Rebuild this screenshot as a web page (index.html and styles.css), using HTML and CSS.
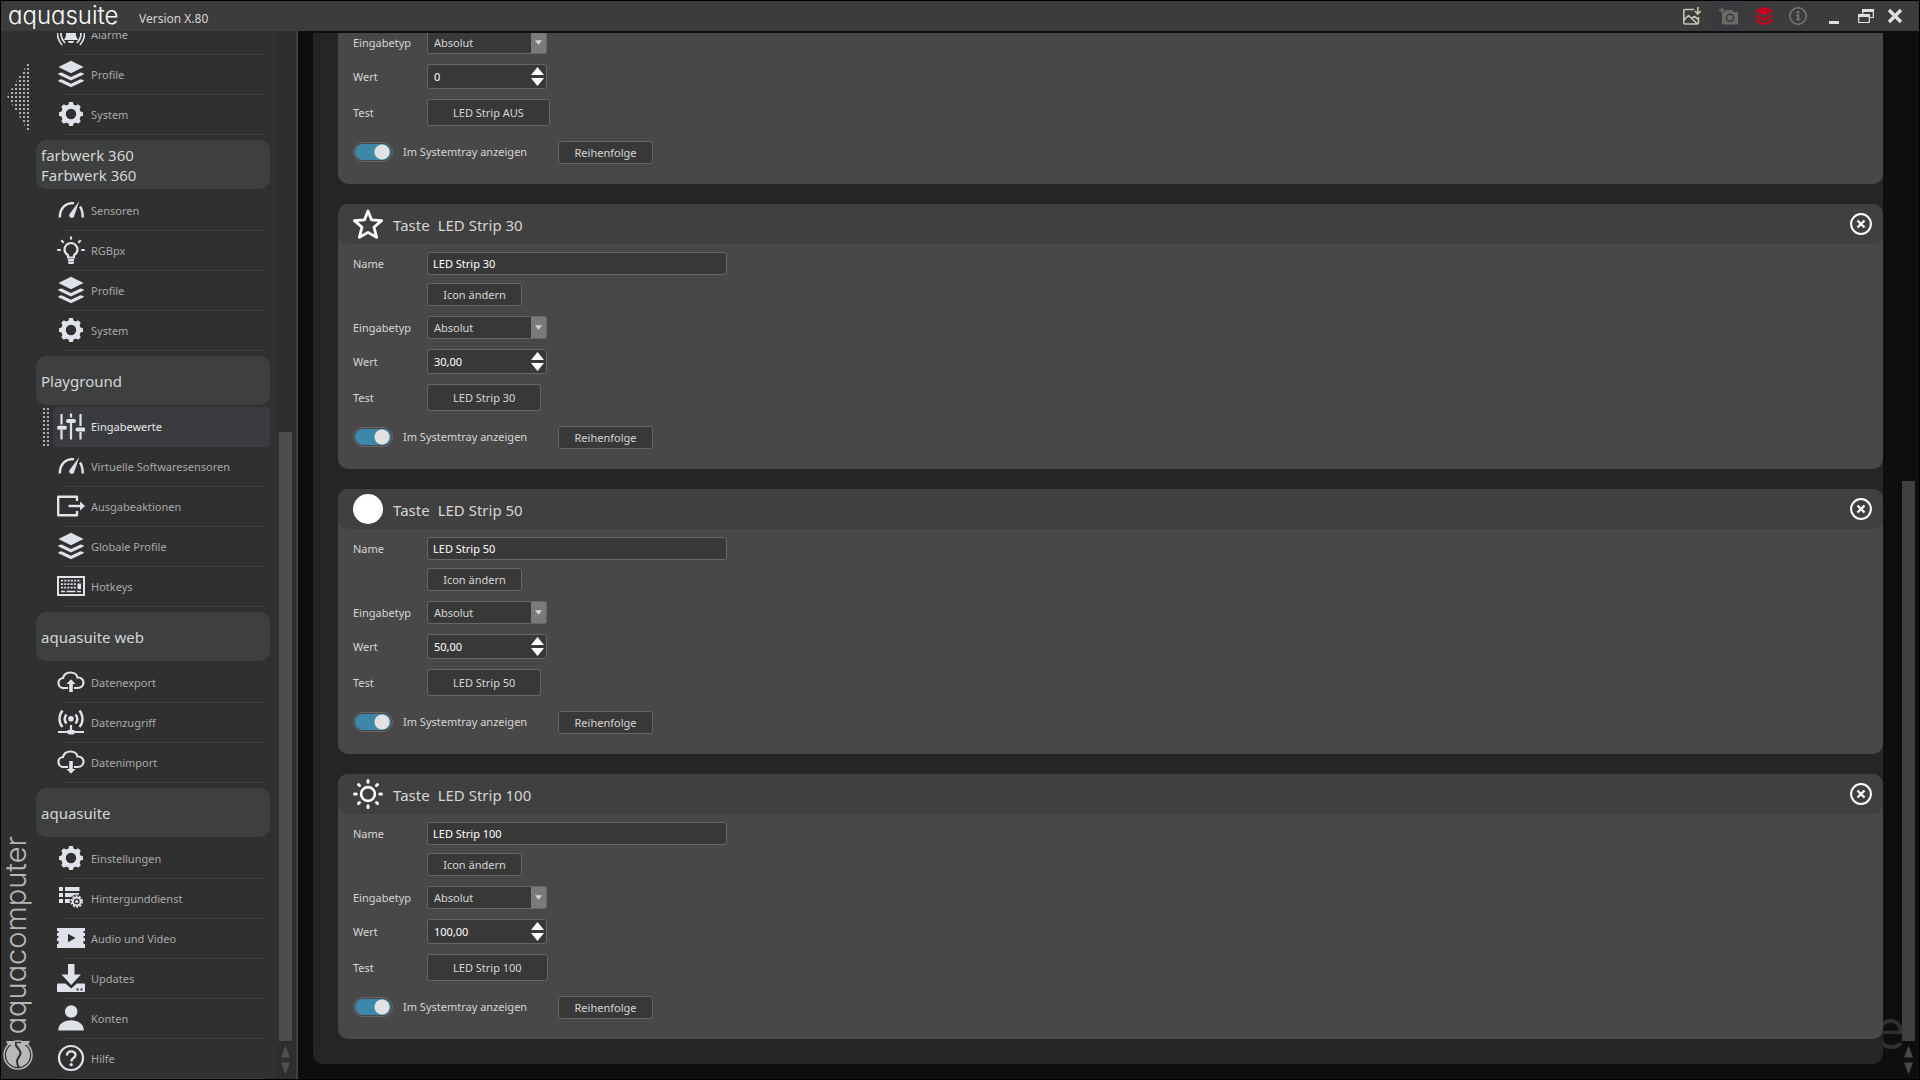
FILE: index.html
```html
<!DOCTYPE html>
<html lang="de">
<head>
  <meta charset="UTF-8" />
  <meta name="viewport" content="width=device-width, initial-scale=1.0"/>
  <title>aquasuite</title>
  <link rel="stylesheet" href="styles.css">
</head>
<body>
  <!-- Icons -->
  <svg class="sprite" aria-hidden="true">
    <symbol id="i-alarm" viewBox="0 0 28 28">
      <path d="M14 4c-4 0-5 3-5 7v5l-2 4h14l-2-4v-5c0-4-1-7-5-7zM11 21h6a3 2 0 0 1-6 0z" fill="currentColor"/>
      <path d="M7 6c-4 5-4 11 1 17M21 6c4 5 4 11-1 17M3 5c-4 7-3 14 2 20M25 5c4 7 3 14-2 20" fill="none" stroke="currentColor" stroke-width="1.7"/>
    </symbol>
    <symbol id="i-layers" viewBox="0 0 28 28">
      <path d="M14 .8 26.6 7 14 13.2 1.400 7z" fill="currentColor"/>
      <path d="M1.400 13.200l3.200-.8L14 17l9.400-4.600 3.200.8v1.200L14 20.500 1.400 14.400zM1.400 20l3.200-.8L14 23.800l9.400-4.600 3.200.8v1.200L14 27.300 1.400 21.200z" fill="currentColor"/>
    </symbol>
    <symbol id="i-gear" viewBox="0 0 28 28">
      <circle cx="14" cy="14" r="7.500" fill="none" stroke="currentColor" stroke-width="4.600"/>
      <g fill="currentColor">
        <path d="M11 6l1.200-4h3.600L17 6zM11 22l1.200 4h3.600l1.200-4zM6 11l-4 1.200v3.600L6 17zM22 11l4 1.200v3.600L22 17z"/>
        <path transform="rotate(45 14 14)" d="M11 6l1.200-4h3.600L17 6zM11 22l1.200 4h3.600l1.200-4zM6 11l-4 1.200v3.600L6 17zM22 11l4 1.200v3.600L22 17z"/>
      </g>
    </symbol>
    <symbol id="i-gauge" viewBox="0 0 28 28">
      <path d="M2.800 21.500C2.800 12 9 6.200 17 7.200M23 10.500c2 2.800 2.700 6.500 2.700 11" fill="none" stroke="currentColor" stroke-width="2.400"/>
      <path d="M22.300 5 17 20.500c-1.300 2.800-6 1-4.600-2.200z" fill="currentColor"/>
    </symbol>
    <symbol id="i-bulb" viewBox="0 0 28 28">
      <path d="M11 21.500v-2.300C8.800 17.800 7.500 16 7.500 13.500a6.500 6.500 0 0 1 13 0c0 2.500-1.300 4.300-3.500 5.700v2.300z" fill="none" stroke="currentColor" stroke-width="2.200"/>
      <path d="M11 25.500h6v1c0 .8-.8 1.500-1.500 1.500h-3c-.7 0-1.500-.7-1.500-1.500z" fill="currentColor"/>
      <path d="M14 .5v3M.2 14h3.600M24.200 14h3.600M4.300 4.300l2.400 2.400M23.700 4.300l-2.400 2.400M11 24h6" stroke="currentColor" stroke-width="2.200"/>
    </symbol>
    <symbol id="i-sliders" viewBox="0 0 28 28">
      <path d="M4.500 2v10.500M4.500 18v9.500M14 1.500v4M14 11v16.500M23.500 2v12M23.500 20v7.500" stroke="currentColor" stroke-width="2.200"/>
      <path d="M2 15.700h6M11 9h6M20.500 17.500h6" stroke="currentColor" stroke-width="4" stroke-linecap="round"/>
    </symbol>
    <symbol id="i-output" viewBox="0 0 28 28">
      <path d="M20 9V4.800H1.200v18.400H20V19" fill="none" stroke="currentColor" stroke-width="2.400" stroke-linejoin="round"/>
      <path d="M11.500 14H24" stroke="currentColor" stroke-width="2.400"/>
      <path d="M23 9.500l5 4.500-5 4.500z" fill="currentColor"/>
    </symbol>
    <symbol id="i-keyboard" viewBox="0 0 28 28">
      <rect x="1" y="5" width="26" height="18" fill="none" stroke="currentColor" stroke-width="2"/>
      <path d="M4 8.700h20" stroke="currentColor" stroke-width="1.700" stroke-dasharray="2 1.300"/>
      <path d="M4 12.200h15M4 15.700h15" stroke="currentColor" stroke-width="1.700" stroke-dasharray="2 1.200"/>
      <path d="M4 19.500h4M9.500 19.500h9M20 19.500h4" stroke="currentColor" stroke-width="1.700"/>
      <path d="M20.500 11.500H24V17h-3.500z" fill="currentColor"/>
    </symbol>
    <symbol id="i-cloud-up" viewBox="0 0 28 28">
      <path d="M11 20H7a5 5 0 0 1-1-10c1-4 4-5.500 7.500-5.500S20 6.500 20.500 9.500c8-.5 8 10.500 0 10.500H17" fill="none" stroke="currentColor" stroke-width="2.200"/>
      <path d="M12.200 24v-8H9.500L14 11.300l4.500 4.700h-2.700v8z" fill="currentColor"/>
    </symbol>
    <symbol id="i-cloud-down" viewBox="0 0 28 28">
      <path d="M11 19H7A5 5 0 0 1 6 9c1-4 4-5.500 7.500-5.500S20 5.500 20.500 8.500c8-.5 8 10.500 0 10.500H17" fill="none" stroke="currentColor" stroke-width="2.200"/>
      <path d="M12.200 13v8H9.500l4.500 4.700 4.500-4.700h-2.700v-8z" fill="currentColor"/>
    </symbol>
    <symbol id="i-antenna" viewBox="0 0 28 28">
      <path d="M9.500 6.500c-2.500 3-2.500 6 0 9M18.500 6.500c2.500 3 2.500 6 0 9M5.500 2.500c-4 5-4 12 0 16.500M22.500 2.500c4 5 4 12 0 16.500" fill="none" stroke="currentColor" stroke-width="2.400"/>
      <circle cx="14" cy="10.800" r="2.800" fill="currentColor"/>
      <path d="M14 17v7M1 24h26" stroke="currentColor" stroke-width="2.200"/>
      <path d="M10.500 22h7v3.500l-1.500 1h-4l-1.500-1z" fill="currentColor"/>
    </symbol>
    <symbol id="i-service" viewBox="0 0 28 28">
      <path d="M2 3h4v4H2zM8 3h14.500v4H8zM2 9h4v4H2zM8 9h14v4H8zM2 15h4v4H2zM8 15h6v4H8z" fill="currentColor"/>
      <circle cx="19.700" cy="17.500" r="7" fill="#303030"/>
      <circle cx="19.700" cy="17.500" r="5.300" fill="none" stroke="currentColor" stroke-width="2" stroke-dasharray="2 1.330"/>
      <circle cx="19.700" cy="17.500" r="3.900" fill="none" stroke="currentColor" stroke-width="1.800"/>
      <circle cx="19.700" cy="17.500" r="1.500" fill="currentColor"/>
    </symbol>
    <symbol id="i-film" viewBox="0 0 28 28">
      <path d="M0 4h28v3h-1.500v2H28v3h-1.500v2H28v3h-1.500v3H28v4H0v-4h1.500v-3H0v-3h1.500v-2H0V9h1.500V7H0z" fill="currentColor"/>
      <path d="M11 9.700 18.500 14 11 18.300z" fill="#303030"/>
    </symbol>
    <symbol id="i-update" viewBox="0 0 28 28">
      <path d="M11 0h6.500v10.500H24L14.200 21 4.500 10.500H11z" fill="currentColor"/>
      <path d="M1 19.500h7.500l5.700 5 5.700-5H27q1 0 1 1.300v6.400q0 .8-1 .8H1q-1 0-1-1v-6.200q0-1.300 1-1.300z" fill="currentColor"/>
      <path d="M19.500 24.500h2v2h-2zM23.500 24.500h2v2h-2z" fill="#303030"/>
    </symbol>
    <symbol id="i-user" viewBox="0 0 28 28">
      <circle cx="14.200" cy="7.500" r="6.300" fill="currentColor"/>
      <path d="M1.200 26.500C1.200 20 7 16.300 14 16.300S26.800 20 26.800 26.500z" fill="currentColor"/>
    </symbol>
    <symbol id="i-help" viewBox="0 0 28 28">
      <circle cx="14" cy="14" r="12" fill="none" stroke="currentColor" stroke-width="2.200"/>
      <path d="M10 11.500c0-5.500 8.500-5.300 8.500-.5 0 3.200-4.200 3-4.200 6.500" fill="none" stroke="currentColor" stroke-width="2.400"/>
      <circle cx="14.200" cy="20.700" r="1.600" fill="currentColor"/>
    </symbol>
    <symbol id="i-close" viewBox="0 0 22 22">
      <circle cx="11" cy="11" r="9.900" fill="none" stroke="currentColor" stroke-width="2"/>
      <path d="M7.500 7.500l7 7M14.500 7.500l-7 7" stroke="currentColor" stroke-width="2.300"/>
    </symbol>
    <symbol id="i-star" viewBox="0 0 30 30">
      <path d="M15 2l3.600 8.900 10 .7-7.600 6.600 2.600 10.200-8.600-5-8.600 5L9 18.200l-7.600-6.600 10-.7z" fill="none" stroke="currentColor" stroke-width="2.800" stroke-linejoin="round"/>
    </symbol>
    <symbol id="i-circle" viewBox="0 0 30 30">
      <circle cx="15" cy="15" r="15" fill="currentColor"/>
    </symbol>
    <symbol id="i-sun" viewBox="0 0 30 30">
      <circle cx="15" cy="15" r="6.900" fill="none" stroke="currentColor" stroke-width="2.600"/>
      <path d="M15 1.600v1.600M15 26.800v1.600M1.600 15h1.600M26.800 15h1.600M5.500 5.500l1 1M23.500 23.500l1 1M5.500 24.500l1-1M23.500 6.500l1-1" stroke="currentColor" stroke-width="3" stroke-linecap="round"/>
    </symbol>
    <symbol id="i-up" viewBox="0 0 13 8"><path d="M6.500 0 13 8H0z" fill="currentColor"/></symbol>
    <symbol id="i-down" viewBox="0 0 13 8"><path d="M0 0h13L6.500 8z" fill="currentColor"/></symbol>
    <symbol id="i-scroll-up" viewBox="0 0 9 12"><path d="M4.500 0 9 12H0z" fill="currentColor"/></symbol>
    <symbol id="i-scroll-down" viewBox="0 0 9 12"><path d="M0 0h9L4.500 12z" fill="currentColor"/></symbol>
    <pattern id="dots" width="4" height="4" patternUnits="userSpaceOnUse"><rect width="2" height="2" fill="#b0b0b0"/></pattern>
  </svg>

  <header class="titlebar">
    <span class="brand">aquasuite</span>
    <span class="version">Version X.80</span>
    <div class="tools">
      <button class="tool tool-image" aria-label="Bild importieren">
        <svg width="18" height="18" viewBox="0 0 18 18" fill="none" stroke="currentColor" stroke-width="1.600">
          <path d="M11 2.500H2Q.8 2.500.8 4v11.500q0 1.500 1.500 1.500H14q1.500 0 1.500-1.500V10M1 13l4.500-4.500 8.500 8M9 11l2.500-1.500L16 13M14.800 0v6M12 4l2.800 3 2.800-3"/>
        </svg>
      </button>
      <button class="tool tool-camera" aria-label="Screenshot">
        <svg width="19" height="18" viewBox="0 0 19 18">
          <path d="M3.500 5H6l1.500-2h6l1.500 2h3q1 0 1 1v10.500q0 1-1 1H4q-1 0-1-1V7z" fill="currentColor"/>
          <circle cx="11" cy="10.800" r="3.600" fill="none" stroke="#3a3b3e" stroke-width="1.600"/>
          <path d="M3 .5v5.500M0 3.200h6" stroke="currentColor" stroke-width="1.600"/>
        </svg>
      </button>
      <button class="tool tool-profile" aria-label="Profile"><svg width="20" height="20"><use href="#i-layers"/></svg></button>
      <button class="tool tool-info" aria-label="Info">
        <svg width="18" height="18" viewBox="0 0 18 18">
          <circle cx="9" cy="9" r="8.200" fill="none" stroke="currentColor" stroke-width="1.500"/>
          <path d="M8 4h2.200v2.200H8zM7 7.500h3.200V12h1.300v1.300H7V12h1.200V8.800H7z" fill="currentColor"/>
        </svg>
      </button>
      <button class="tool tool-minimize" aria-label="Minimieren"><svg width="16" height="16" viewBox="0 0 16 16"><path d="M3 13h10v3H3z" fill="currentColor"/></svg></button>
      <button class="tool tool-restore" aria-label="Wiederherstellen">
        <svg width="16" height="16" viewBox="0 0 16 16">
          <path d="M4.700 7V2.500h10.600v7H11" fill="none" stroke="currentColor" stroke-width="1.200"/>
          <path d="M.7 7.500h10.600v7H.7z" fill="none" stroke="currentColor" stroke-width="1.200"/>
          <path d="M4 1h12v3H4zM0 6h12v3H0z" fill="currentColor"/>
        </svg>
      </button>
      <button class="tool tool-close" aria-label="Schließen"><svg width="16" height="16" viewBox="0 0 16 16"><path d="M2 2l12 12M14 2L2 14" stroke="currentColor" stroke-width="3.400"/></svg></button>
    </div>
  </header>

  <div class="workspace">
    <aside class="sidebar">
      <div class="rail">
        <svg class="collapse" width="24" height="76" viewBox="0 0 24 76"><path d="M0 36 24-2V76z" fill="url(#dots)"/></svg>
        <div class="company">
          <span class="company-name">aquacomputer</span>
          <svg width="30" height="30" viewBox="0 0 30 30">
            <circle cx="15" cy="15" r="14" fill="none" stroke="#b8b8b8" stroke-width="1.500"/>
            <circle cx="15" cy="15" r="12" fill="#b8b8b8"/>
            <path d="M13 2c-3 5 7 7 4 13-2 4-5 5-1 13" fill="none" stroke="#303030" stroke-width="2"/>
            <path d="M3 1h9v4H5zM18 1h9l-2 4h-7z" fill="#b8b8b8"/>
          </svg>
        </div>
      </div>

      <nav class="nav">
        <a class="item" href="#alarme"><svg><use href="#i-alarm"/></svg><span>Alarme</span></a>
        <a class="item" href="#profile-1"><svg><use href="#i-layers"/></svg><span>Profile</span></a>
        <a class="item" href="#system-1"><svg><use href="#i-gear"/></svg><span>System</span></a>

        <h2 class="group">farbwerk 360<br>Farbwerk 360</h2>
        <a class="item" href="#sensoren"><svg><use href="#i-gauge"/></svg><span>Sensoren</span></a>
        <a class="item" href="#rgbpx"><svg><use href="#i-bulb"/></svg><span>RGBpx</span></a>
        <a class="item" href="#profile-2"><svg><use href="#i-layers"/></svg><span>Profile</span></a>
        <a class="item" href="#system-2"><svg><use href="#i-gear"/></svg><span>System</span></a>

        <h2 class="group">Playground</h2>
        <a class="item active" href="#eingabewerte">
          <svg class="grip" viewBox="0 0 6 38"><path d="M0 0h6v38H0z" fill="url(#dots)"/></svg>
          <svg><use href="#i-sliders"/></svg><span>Eingabewerte</span>
        </a>
        <a class="item" href="#softwaresensoren"><svg><use href="#i-gauge"/></svg><span>Virtuelle Softwaresensoren</span></a>
        <a class="item" href="#ausgabeaktionen"><svg><use href="#i-output"/></svg><span>Ausgabeaktionen</span></a>
        <a class="item" href="#globale-profile"><svg><use href="#i-layers"/></svg><span>Globale Profile</span></a>
        <a class="item" href="#hotkeys"><svg><use href="#i-keyboard"/></svg><span>Hotkeys</span></a>

        <h2 class="group">aquasuite web</h2>
        <a class="item" href="#datenexport"><svg><use href="#i-cloud-up"/></svg><span>Datenexport</span></a>
        <a class="item" href="#datenzugriff"><svg><use href="#i-antenna"/></svg><span>Datenzugriff</span></a>
        <a class="item" href="#datenimport"><svg><use href="#i-cloud-down"/></svg><span>Datenimport</span></a>

        <h2 class="group">aquasuite</h2>
        <a class="item" href="#einstellungen"><svg><use href="#i-gear"/></svg><span>Einstellungen</span></a>
        <a class="item" href="#hintergrunddienst"><svg><use href="#i-service"/></svg><span>Hintergunddienst</span></a>
        <a class="item" href="#audio-video"><svg><use href="#i-film"/></svg><span>Audio und Video</span></a>
        <a class="item" href="#updates"><svg><use href="#i-update"/></svg><span>Updates</span></a>
        <a class="item" href="#konten"><svg><use href="#i-user"/></svg><span>Konten</span></a>
        <a class="item" href="#hilfe"><svg><use href="#i-help"/></svg><span>Hilfe</span></a>
      </nav>

      <div class="scrollbar scrollbar-nav">
        <div class="before"></div>
        <div class="thumb"></div>
        <svg><use href="#i-scroll-up"/></svg>
        <svg><use href="#i-scroll-down"/></svg>
      </div>
    </aside>

    <main class="main">
      <span class="watermark" aria-hidden="true">e</span>
      <div class="panel">
        <section class="card card-cut">
          <div class="row">
            <label for="typ-0">Eingabetyp</label>
            <div class="select"><select id="typ-0"><option>Absolut</option></select><svg><use href="#i-down"/></svg></div>
          </div>
          <div class="row">
            <label for="wert-0">Wert</label>
            <div class="spin">
              <input id="wert-0" type="text" value="0">
              <div class="arrows">
                <button aria-label="Erhöhen"><svg><use href="#i-up"/></svg></button>
                <button aria-label="Verringern"><svg><use href="#i-down"/></svg></button>
              </div>
            </div>
          </div>
          <div class="row">
            <span>Test</span>
            <button class="btn btn-test">LED Strip AUS</button>
          </div>
          <div class="tray">
            <input class="toggle" id="tray-0" type="checkbox" checked>
            <label for="tray-0">Im Systemtray anzeigen</label>
            <button class="btn">Reihenfolge</button>
          </div>
        </section>

        <section class="card">
          <header class="card-head">
            <svg><use href="#i-star"/></svg>
            <h3><span>Taste</span> <span>LED Strip 30</span></h3>
            <button class="close" aria-label="Entfernen"><svg><use href="#i-close"/></svg></button>
          </header>
          <div class="row row-name">
            <label for="name-30">Name</label>
            <input class="field" id="name-30" type="text" value="LED Strip 30">
          </div>
          <div class="row">
            <span></span>
            <button class="btn">Icon ändern</button>
          </div>
          <div class="row">
            <label for="typ-30">Eingabetyp</label>
            <div class="select"><select id="typ-30"><option>Absolut</option></select><svg><use href="#i-down"/></svg></div>
          </div>
          <div class="row">
            <label for="wert-30">Wert</label>
            <div class="spin">
              <input id="wert-30" type="text" value="30,00">
              <div class="arrows">
                <button aria-label="Erhöhen"><svg><use href="#i-up"/></svg></button>
                <button aria-label="Verringern"><svg><use href="#i-down"/></svg></button>
              </div>
            </div>
          </div>
          <div class="row">
            <span>Test</span>
            <button class="btn btn-test">LED Strip 30</button>
          </div>
          <div class="tray">
            <input class="toggle" id="tray-30" type="checkbox" checked>
            <label for="tray-30">Im Systemtray anzeigen</label>
            <button class="btn">Reihenfolge</button>
          </div>
        </section>

        <section class="card">
          <header class="card-head">
            <svg><use href="#i-circle"/></svg>
            <h3><span>Taste</span> <span>LED Strip 50</span></h3>
            <button class="close" aria-label="Entfernen"><svg><use href="#i-close"/></svg></button>
          </header>
          <div class="row row-name">
            <label for="name-50">Name</label>
            <input class="field" id="name-50" type="text" value="LED Strip 50">
          </div>
          <div class="row">
            <span></span>
            <button class="btn">Icon ändern</button>
          </div>
          <div class="row">
            <label for="typ-50">Eingabetyp</label>
            <div class="select"><select id="typ-50"><option>Absolut</option></select><svg><use href="#i-down"/></svg></div>
          </div>
          <div class="row">
            <label for="wert-50">Wert</label>
            <div class="spin">
              <input id="wert-50" type="text" value="50,00">
              <div class="arrows">
                <button aria-label="Erhöhen"><svg><use href="#i-up"/></svg></button>
                <button aria-label="Verringern"><svg><use href="#i-down"/></svg></button>
              </div>
            </div>
          </div>
          <div class="row">
            <span>Test</span>
            <button class="btn btn-test">LED Strip 50</button>
          </div>
          <div class="tray">
            <input class="toggle" id="tray-50" type="checkbox" checked>
            <label for="tray-50">Im Systemtray anzeigen</label>
            <button class="btn">Reihenfolge</button>
          </div>
        </section>

        <section class="card">
          <header class="card-head">
            <svg><use href="#i-sun"/></svg>
            <h3><span>Taste</span> <span>LED Strip 100</span></h3>
            <button class="close" aria-label="Entfernen"><svg><use href="#i-close"/></svg></button>
          </header>
          <div class="row row-name">
            <label for="name-100">Name</label>
            <input class="field" id="name-100" type="text" value="LED Strip 100">
          </div>
          <div class="row">
            <span></span>
            <button class="btn">Icon ändern</button>
          </div>
          <div class="row">
            <label for="typ-100">Eingabetyp</label>
            <div class="select"><select id="typ-100"><option>Absolut</option></select><svg><use href="#i-down"/></svg></div>
          </div>
          <div class="row">
            <label for="wert-100">Wert</label>
            <div class="spin">
              <input id="wert-100" type="text" value="100,00">
              <div class="arrows">
                <button aria-label="Erhöhen"><svg><use href="#i-up"/></svg></button>
                <button aria-label="Verringern"><svg><use href="#i-down"/></svg></button>
              </div>
            </div>
          </div>
          <div class="row">
            <span>Test</span>
            <button class="btn btn-test">LED Strip 100</button>
          </div>
          <div class="tray">
            <input class="toggle" id="tray-100" type="checkbox" checked>
            <label for="tray-100">Im Systemtray anzeigen</label>
            <button class="btn">Reihenfolge</button>
          </div>
        </section>
      </div>

      <div class="scrollbar scrollbar-main">
        <div class="before"></div>
        <div class="thumb"></div>
        <svg><use href="#i-scroll-up"/></svg>
        <svg><use href="#i-scroll-down"/></svg>
      </div>
    </main>
  </div>
</body>
</html>
```
FILE: styles.css
```css
* {
  box-sizing: border-box;
}

body {
  margin: 0;
  height: 100vh;
  display: flex;
  flex-direction: column;
  overflow: hidden;
  border: 1px solid #000;
  background-color: #0e0e0e;
  color: #d6d6d6;
  font-family: "Noto Sans", "Open Sans", sans-serif;
  font-size: 11px;
}

button, input, select {
  font: inherit;
  color: inherit;
}

button {
  padding: 0;
  border: none;
  background: none;
  cursor: pointer;
}

svg {
  display: block;
  flex: none;
}

.sprite {
  position: absolute;
  width: 0;
  height: 0;
}

/* Titelleiste */
.titlebar {
  flex: none;
  display: flex;
  align-items: center;
  height: 30px;
  padding: 0 7px;
  background-color: #3c3c3c;
}

.brand {
  width: 131px;
  font-family: Inter, sans-serif;
  font-feature-settings: "cv11";
  font-weight: 300;
  font-size: 24px;
  line-height: 28px;
  color: #fff;
}

.version {
  font-size: 12px;
  padding-top: 4px;
}

.tools {
  display: flex;
  margin-left: auto;
}

.tool {
  display: flex;
  align-items: center;
  justify-content: center;
  width: 33px;
  height: 28px;
}

.tool-image {
  width: 40px;
  color: #c6c5b6;
}

.tool-camera {
  background-color: #393a3d;
  color: #6a6a66;
}

.tool-profile {
  width: 38px;
  color: #c8001c;
}

.tool-info {
  width: 30px;
  color: #787878;
}

.tool-minimize, .tool-restore, .tool-close {
  color: #e0e0e0;
}

.tool-minimize {
  width: 41px;
}

.tool-restore {
  width: 24px;
}

.tool-close {
  width: 34px;
}

.workspace {
  flex: 1;
  min-height: 0;
  display: flex;
}

/* Navigation */
.sidebar {
  flex: none;
  display: flex;
  width: 297px;
  padding-top: 2px;
  border-right: 2px solid #3f3f3f;
  background-color: #303030;
}

.rail {
  display: flex;
  flex-direction: column;
  justify-content: space-between;
  width: 35px;
  padding: 27px 0 9px 2px;
}

.collapse {
  margin-left: 4px;
}

.company {
  display: flex;
  flex-direction: column;
  align-items: flex-start;
  gap: 6px;
}

.company-name {
  writing-mode: vertical-rl;
  transform: rotate(180deg);
  font-family: Inter, sans-serif;
  font-feature-settings: "cv11";
  font-weight: 300;
  font-size: 29px;
  line-height: 26px;
  color: #b8b8b8;
}

.nav {
  flex: 1;
  display: flex;
  flex-direction: column;
  justify-content: flex-end;
  overflow: hidden;
}

.group {
  flex: none;
  display: flex;
  align-items: center;
  height: 49px;
  margin: 5px 0 2px;
  padding: 0 5px;
  border-radius: 10px;
  background-color: #3e403f;
  font-size: 15px;
  font-weight: normal;
  line-height: 20px;
}

.item {
  flex: none;
  position: relative;
  display: flex;
  align-items: center;
  gap: 6px;
  height: 40px;
  margin-left: 17px;
  padding: 0 0 2px 4px;
  color: #a9a9a9;
  text-decoration: none;
}

.item::after {
  content: "";
  position: absolute;
  left: 8px;
  right: 4px;
  bottom: 0;
  border-bottom: 1px solid #3d3d3f;
}

.item svg {
  width: 28px;
  height: 28px;
  color: #dfe2e8;
}

.item.active {
  border-radius: 4px;
  background-color: #3a3b3f;
  color: #e6e6e6;
}

.item .grip {
  position: absolute;
  left: -10px;
  top: 1px;
  width: 6px;
  height: 38px;
}

.scrollbar {
  flex: none;
  display: flex;
  flex-direction: column;
  align-items: center;
  gap: 4px;
  padding-bottom: 4px;
}

.scrollbar svg {
  width: 9px;
  height: 13px;
}

.scrollbar .thumb {
  width: 13px;
}

.scrollbar .before {
  margin-bottom: -4px;
}

.scrollbar-nav {
  width: 19px;
  margin-left: 7px;
  padding-right: 2px;
  background-color: #2d2d2d;
  color: #505050;
}

.scrollbar-nav .before {
  flex: 40;
}

.scrollbar-nav .thumb {
  flex: 61;
  background-color: #4d4d4d;
}

/* Hauptbereich */
.main {
  flex: 1;
  min-width: 0;
  position: relative;
  display: flex;
  padding: 2px 4px 0 15px;
}

.panel {
  flex: 1;
  min-width: 0;
  position: relative;
  display: flex;
  flex-direction: column;
  justify-content: flex-end;
  gap: 20px;
  margin-bottom: 15px;
  padding: 0 0 25px 25px;
  overflow: hidden;
  border-radius: 0 0 10px 10px;
  background-color: #252525;
}

.watermark {
  position: absolute;
  right: 14px;
  bottom: 22px;
  font-family: Lato, sans-serif;
  font-weight: 400;
  font-size: 58px;
  line-height: 60px;
  color: #303030;
}

.scrollbar-main {
  position: relative;
  width: 13px;
  margin-left: 19px;
  color: #484848;
}

.scrollbar-main .before {
  flex: 4;
}

.scrollbar-main .thumb {
  flex: 5;
  background-color: #404040;
}

/* Karten */
.card {
  flex: none;
  padding-bottom: 20px;
  border-radius: 10px;
  background-color: #484848;
}

.card-head {
  display: flex;
  align-items: center;
  gap: 10px;
  height: 40px;
  padding: 0 11px 0 15px;
  border-radius: 10px;
  background-color: #404040;
}

.card-head svg {
  width: 30px;
  height: 30px;
  color: #fff;
}

.card-head h3 {
  display: flex;
  gap: 8px;
  margin: 0;
  padding-top: 2px;
  font-size: 15px;
  font-weight: normal;
}

.close {
  margin-left: auto;
}

.card-head .close svg {
  width: 22px;
  height: 22px;
}

.row {
  display: grid;
  grid-template-columns: 74px 300px;
  align-items: center;
  justify-items: start;
  margin: 10px 0 0 15px;
}

.row-name, .row-name + .row {
  margin-top: 8px;
}

.card-cut {
  border-radius: 0 0 10px 10px;
}

.card-cut .row:first-child {
  margin-top: 0;
}

.btn, .field, .select, .spin {
  border: 1px solid #666;
  border-radius: 3px;
  background-color: #383838;
}

.btn {
  min-width: 95px;
  height: 23px;
  padding: 0 10px;
}

.btn-test {
  height: 27px;
  padding: 0 25px;
}

.field {
  width: 100%;
  height: 23px;
  padding: 0 5px;
  color: #fff;
}

.select, .spin {
  display: flex;
  align-items: center;
  width: 120px;
  height: 23px;
}

.select select {
  flex: 1;
  height: 100%;
  padding: 0 6px;
  border: none;
  background: none;
  appearance: none;
}

.select svg {
  width: 15px;
  height: 21px;
  padding: 0 4px;
  background-color: #7a7a7a;
}

.spin {
  height: 25px;
}

.spin input {
  flex: 1;
  min-width: 0;
  height: 100%;
  padding: 0 6px;
  border: none;
  background: none;
  color: #fff;
}

.arrows {
  display: flex;
  flex-direction: column;
  gap: 3px;
  margin-right: 2px;
}

.arrows svg {
  width: 13px;
  height: 8px;
  color: #fff;
}

.tray {
  display: flex;
  align-items: flex-start;
  margin: 15px 0 0 15px;
}

.tray label {
  width: 165px;
  padding-left: 10px;
  line-height: 21px;
}

.toggle {
  appearance: none;
  display: flex;
  align-items: center;
  justify-content: flex-end;
  width: 40px;
  height: 20px;
  margin: 1px 0 0;
  padding: 1px;
  border: 1px solid #666;
  border-radius: 10px;
  background: #484848;
}

.toggle::before {
  content: "";
  width: 36px;
  height: 16px;
  border-radius: 8px;
  background: radial-gradient(circle at 27px 8px, #e2e2e2 7px, #3d87a9 8px);
}
```
